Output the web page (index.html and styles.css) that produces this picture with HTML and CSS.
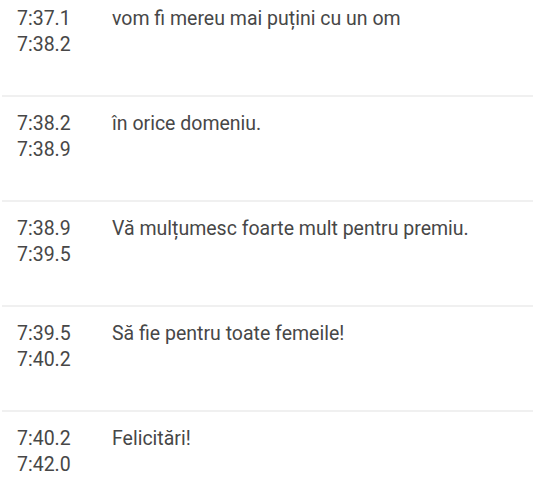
FILE: index.html
```html
<!DOCTYPE html>
<html lang="ro">
<head>
  <meta charset="UTF-8">
  <title>Transcriere</title>
  <link rel="stylesheet" href="styles.css">
</head>
<body>

  <div class="transcript">
    <div class="cue">
      <div class="cue-time">7:37.1<br>7:38.2</div>
      <div class="cue-text">vom fi mereu mai puțini cu un om</div>
    </div>
    <div class="cue">
      <div class="cue-time">7:38.2<br>7:38.9</div>
      <div class="cue-text">în orice domeniu.</div>
    </div>
    <div class="cue">
      <div class="cue-time">7:38.9<br>7:39.5</div>
      <div class="cue-text">Vă mulțumesc foarte mult pentru premiu.</div>
    </div>
    <div class="cue">
      <div class="cue-time">7:39.5<br>7:40.2</div>
      <div class="cue-text">Să fie pentru toate femeile!</div>
    </div>
    <div class="cue">
      <div class="cue-time">7:40.2<br>7:42.0</div>
      <div class="cue-text">Felicitări!</div>
    </div>
  </div>

</body>
</html>
```

FILE: styles.css
```css
body {
  margin: 0;
  background-color: #fff;
  font-family: Roboto, "Liberation Sans", sans-serif;
  color: #474747;
  overflow: hidden;
}

.transcript {
  margin-top: -8px;
  margin-left: 2px;
}

/* 1行 = 時間 + テキスト */
.cue {
  display: flex;
  padding: 14px 0 37px;
  border-bottom: 2px solid #f0f0f0;
  font-size: 19.5px;
  line-height: 26px;
}

.cue-time {
  width: 95px;
  padding-left: 15px;
  flex-shrink: 0;
}

.cue-text {
  flex: 1;
}
```
